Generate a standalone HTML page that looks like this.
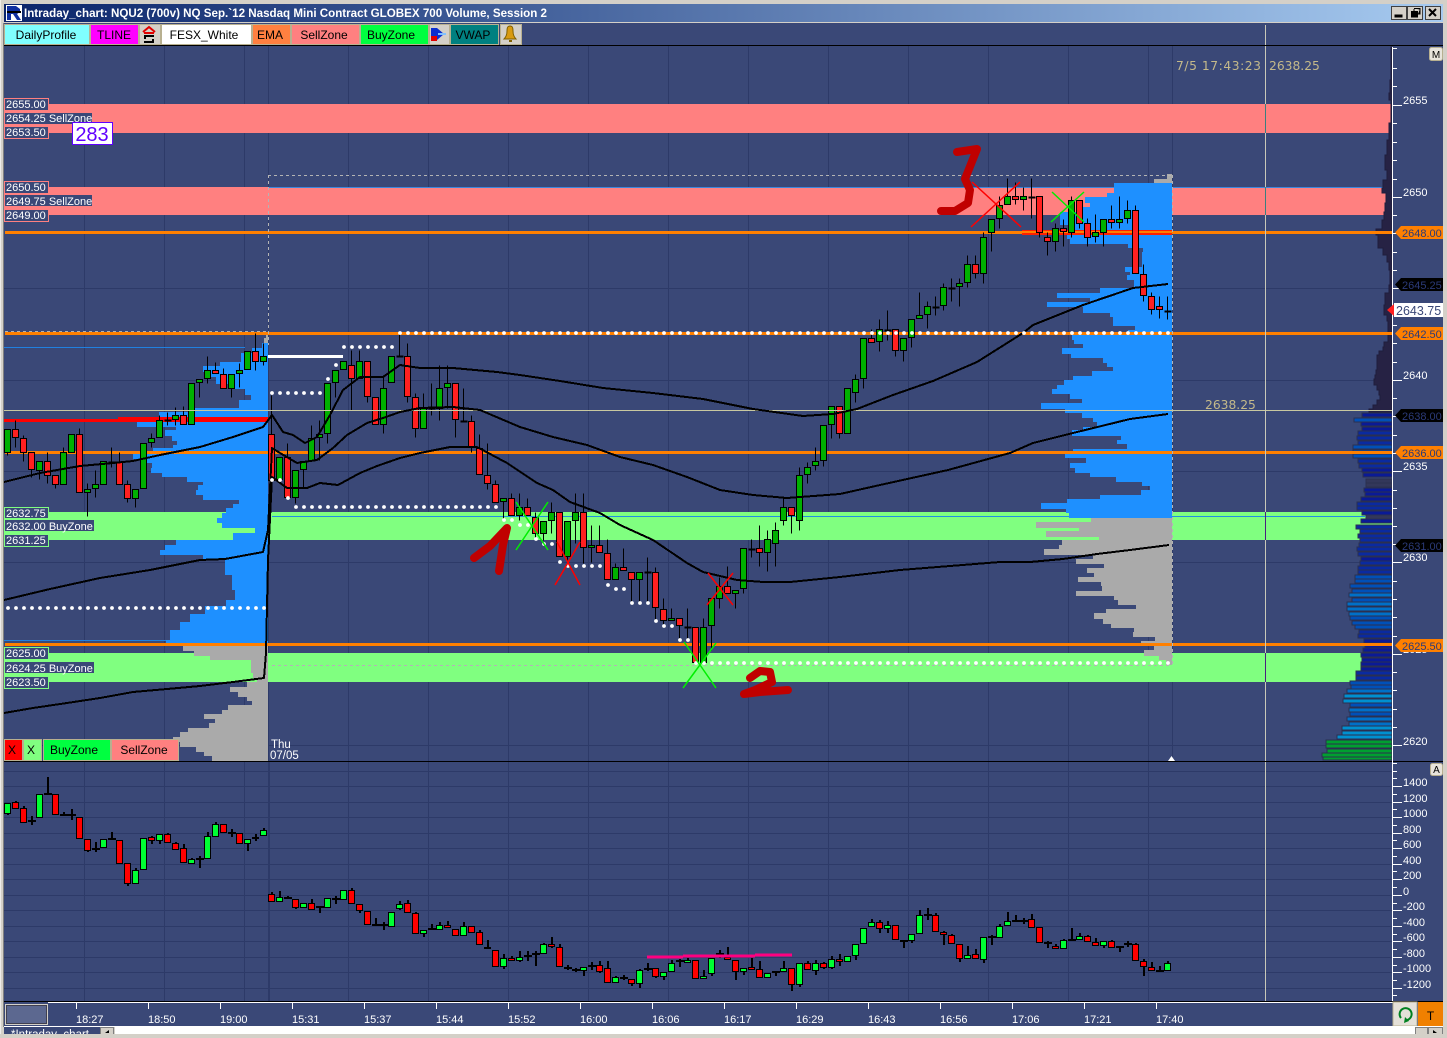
<!DOCTYPE html>
<html><head><meta charset="utf-8"><title>Intraday_chart</title>
<style>
html,body{margin:0;padding:0;background:#D4D0C8;width:1447px;height:1038px;overflow:hidden}
svg{display:block;position:absolute;left:0;top:0}
text{font-family:"Liberation Sans",sans-serif;font-size:11px;fill:#fff;white-space:pre}
.k text{fill:#000;font-size:12px;text-anchor:middle}
.tag text{fill:#2B3A78;font-size:11px}
.tan{font-family:"DejaVu Sans",sans-serif;font-size:12.3px;fill:#C4B98A}
</style></head><body>
<svg width="1447" height="1038" viewBox="0 0 1447 1038" xmlns="http://www.w3.org/2000/svg">
<defs><linearGradient id="tb" x1="0" x2="1" y1="0" y2="0"><stop offset="0" stop-color="#0A246A"/><stop offset="1" stop-color="#A6CAF0"/></linearGradient></defs>
<rect width="1447" height="1038" fill="#D4D0C8"/>
<rect x="0" y="0" width="1" height="1038" fill="#fff" opacity=".6"/>
<rect x="3" y="23" width="1" height="1004" fill="#808080"/>
<!-- title bar -->
<rect x="4" y="4" width="1439" height="18" fill="url(#tb)"/>
<rect x="6" y="5" width="16" height="16" fill="#fff"/>
<path d="M7 6h9l4 3v3l-3 2 4 6h-4l-4-6h-2v6H7z" fill="#1030A0"/>
<path d="M7 11h14v2H7z" fill="#000"/>
<text x="24" y="17" font-weight="bold" textLength="523" lengthAdjust="spacingAndGlyphs" style="font-size:12px;font-weight:bold">Intraday_chart: NQU2 (700v) NQ Sep.`12 Nasdaq Mini Contract GLOBEX 700 Volume, Session 2</text>
<g fill="#D4D0C8" stroke="#404040"><rect x="1391.5" y="6.5" width="15" height="13"/><rect x="1407.5" y="6.5" width="15" height="13"/><rect x="1425.5" y="6.5" width="15" height="13"/></g>
<path d="M1395 15h7v2h-7zM1414 8.500h6v1M1414 9v2M1420 9v5h-2M1411 11.500h7M1411.500 11v6h6v-6M1411 12.500h7" fill="#000" stroke="#000" stroke-width="1"/>
<path d="M1429 9l7 7M1436 9l-7 7" stroke="#000" stroke-width="2" fill="none"/>
<!-- chart bg -->
<rect x="4" y="23" width="1439" height="1004" fill="#3A4877"/>
<!-- grid -->
<path d="M84.500 46V1001M164.500 46V1001M244.500 46V1001M268.500 46V1001M348.500 46V1001M428.500 46V1001M508.500 46V1001M588.500 46V1001M668.500 46V1001M748.500 46V1001M828.500 46V1001M908.500 46V1001M988.500 46V1001M1068.500 46V1001M1148.500 46V1001M1172.500 46V761M4 105.500H1392M4 197.500H1392M4 288.500H1392M4 380.500H1392M4 471.500H1392M4 562.500H1392M4 654.500H1392M4 745.500H1392M4 771.500H1392M4 786.500H1392M4 802.500H1392M4 817.500H1392M4 833.500H1392M4 848.500H1392M4 864.500H1392M4 879.500H1392M4 895.500H1392M4 910.500H1392M4 926.500H1392M4 941.500H1392M4 957.500H1392M4 972.500H1392M4 988.500H1392" stroke="#2D3A68" fill="none"/>
<rect x="268" y="762" width="2" height="239" fill="#2D3A68"/>
<!-- zones -->
<rect x="4" y="104" width="1388" height="29" fill="#FF8080"/>
<rect x="4" y="187" width="1388" height="28" fill="#FF8080"/>
<rect x="4" y="512" width="1388" height="28" fill="#80FF80"/>
<rect x="4" y="653" width="1388" height="29" fill="#80FF80"/>
<path d="M268 187.500H1390" stroke="#3D86DC" fill="none"/>
<path d="M272 516.500H1365" stroke="#2090E0" fill="none"/>
<path d="M4 347.500H245" stroke="#2080E0" fill="none"/>
<path d="M4 640.500H172" stroke="#2080E0" fill="none"/>
<!-- left profile -->
<path fill="#1E90FF" d="M268 343H262V348H252V353H241V362H220V366H203V372H208V377H216V384H231V389H245V395H251V400H239V408H195V412H159V422H137V427H176V430H165V436H172V441H177V445H173V448H153V453H133V459H147V463H152V468H151V473H162V477H187V482H203V485H198V490H196V495H203V500H239V504H233V508H226V513H222V518H217V523H222V528H255V533H233V540H176V545H165V550H160V555H203V560H225V575H232V590H235V600H226V606H205V614H190V622H180V630H170V640H166V646H268z"/>
<path fill="#AAAAAA" d="M268 333H266V338H264V343H268zM268 646H183V651H194V656H210V660H251V673H253V678H257V682H247V687H230V692H238V697H247V701H252V705H228V710H222V714H204V719H215V723H209V728H188V732H180V737H173V742H180V747H196V752H204V756H212V761H268z"/>
<!-- right profile -->
<path fill="#1E90FF" d="M1172 183H1114V193H1107V197H1085V203H1090V207H1080V212H1060V225H1070V231H1060V235H1067V239H1070V244H1128V248H1143V252H1142V267H1125V272H1130V275H1127V280H1134V288H1100V293H1057V298H1090V302H1047V307H1083V313H1110V317H1113V326H1135V330H1128V335H1072V340H1074V344H1083V348H1062V354H1071V358H1103V363H1107V367H1113V371H1092V376H1073V380H1064V385H1057V389H1052V394H1070V399H1082V403H1041V409H1065V413H1082V418H1093V422H1097V427H1083V430H1072V436H1121V440H1117V444H1127V449H1073V454H1065V458H1086V463H1070V468H1075V473H1090V477H1116V482H1142V486H1150V490H1141V495H1100V499H1067V503H1041V509H1066V513H1069V518H1172z"/>
<path fill="#AAAAAA" d="M1172 174H1167V179H1154V183H1172zM1172 518H1091V522H1036V528H1079V531H1046V537H1099V540H1062V545H1059V549H1044V555H1093V559H1076V564H1104V568H1087V573H1094V577H1078V582H1101V586H1102V591H1076V596H1114V600H1118V605H1136V609H1106V613H1094V619H1103V624H1111V628H1134V632H1133V637H1155V641H1141V646H1154V650H1144V656H1159V660H1166V665H1172z"/>
<path d="M164 410.500H268M1065 410.500H1172" stroke="#FF8000" fill="none"/>
<!-- DOM profile -->
<path fill="#262244" stroke="#1F1D3C" d="M1392 47H1391V80H1390V93H1389V100H1391V123H1389V140H1387V155H1385V170H1387V180H1383V188H1382V193H1386V203H1385V212H1384V220H1382V229H1376V235H1378V248H1383V255H1387V262H1389V270H1390V285H1389V293H1385V305H1384V315H1387V321H1388V333H1390V335H1388V342H1384V347H1383V351H1379V355H1377V370H1376V375H1375V379H1374V385H1377V390H1379V395H1380V400H1377V405H1373V409H1369V412H1392z"/>
<g stroke="#2B3050">
<path fill="#33375A" d="M1366 479H1392v4H1366zM1366 483H1392v4H1366zM1366 515H1392v4H1366z"/>
<path fill="#0A1A96" d="M1362 413H1392v4H1362zM1361 422H1392v4H1361zM1362 427H1392v4H1362zM1362 468H1392v4H1362zM1363 473H1392v4H1363zM1364 488H1392v4H1364zM1365 492H1392v4H1365zM1361 497H1392v4H1361zM1362 511H1392v4H1362zM1361 519H1392v4H1361zM1361 557H1392v4H1361zM1364 639H1392v4H1364zM1365 644H1392v4H1365zM1363 648H1392v4H1363zM1361 653H1392v4H1361zM1362 658H1392v4H1362zM1361 662H1392v4H1361zM1361 667H1392v4H1361z"/>
<path fill="#0A2AA0" d="M1358 431H1392v4H1358zM1357 436H1392v4H1357zM1358 441H1392v4H1358zM1358 459H1392v4H1358zM1359 464H1392v4H1359zM1357 502H1392v4H1357zM1357 506H1392v4H1357zM1356 525H1392v4H1356zM1360 529H1392v4H1360zM1358 534H1392v4H1358zM1360 538H1392v4H1360zM1359 543H1392v4H1359zM1357 547H1392v4H1357zM1358 552H1392v4H1358zM1360 561H1392v4H1360zM1358 566H1392v4H1358zM1358 570H1392v4H1358zM1359 630H1392v4H1359zM1358 634H1392v4H1358zM1356 671H1392v4H1356zM1356 676H1392v4H1356z"/>
<path fill="#0050B8" d="M1354 418H1392v4H1354zM1353 445H1392v4H1353zM1353 450H1392v4H1353zM1353 454H1392v4H1353zM1355 575H1392v4H1355zM1355 579H1392v4H1355zM1350 584H1392v4H1350zM1352 589H1392v4H1352zM1352 598H1392v4H1352zM1350 616H1392v4H1350zM1352 621H1392v4H1352zM1355 625H1392v4H1355zM1350 681H1392v4H1350zM1351 685H1392v4H1351zM1350 703H1392v4H1350zM1350 712H1392v4H1350z"/>
<path fill="#0070C8" d="M1349 593H1392v4H1349zM1347 602H1392v4H1347zM1347 607H1392v4H1347zM1349 612H1392v4H1349zM1347 689H1392v4H1347zM1349 708H1392v4H1349zM1347 717H1392v4H1347zM1349 722H1392v4H1349z"/>
<path fill="#0090D0" d="M1344 694H1392v4H1344zM1343 699H1392v4H1343zM1342 726H1392v4H1342zM1342 731H1392v4H1342zM1337 735H1392v4H1337z"/>
<path fill="#00A030" d="M1326 740H1392v4H1326zM1326 744H1392v4H1326zM1327 749H1392v4H1327zM1322 753H1392v4H1322zM1323 757H1392v3H1323z"/>
</g>
<!-- orange lines -->
<g fill="#FF8000"><rect x="5" y="231" width="1388" height="3"/><rect x="5" y="332" width="1388" height="3"/><rect x="5" y="451" width="1388" height="3"/><rect x="5" y="643" width="1388" height="3"/></g>
<!-- red lines -->
<rect x="4" y="419" width="264" height="3" fill="#FF0000"/><rect x="118" y="417" width="150" height="2" fill="#FF0000"/>
<rect x="1022" y="230" width="150" height="5" fill="#FF2000"/><rect x="1022" y="231" width="150" height="2" fill="#FF8000"/>
<rect x="268" y="355" width="75" height="3" fill="#fff"/>
<!-- dashed -->
<path d="M268 175.500H1172M268.500 175V345M5 331.500H268M1172.500 175V665M272 665.500H1172" stroke="#B4B4B4" stroke-dasharray="3 3" fill="none"/>
<!-- top candles -->
<g transform="translate(.5 .5)">
<path stroke="#000" fill="none" d="M7 429V455M15 420V447M23 435V461M31 452V477M39 461V479M47 452V483M55 475V488M63 447V484M79 428V492M87 483V516M95 470V497M111 447V467M119 452V484M127 480V502M135 489V507M151 433V447M159 415V437M167 412V425M175 407V425M183 406V424M199 379V397M207 356V383M215 362V373M223 368V388M231 374V397M239 363V387M255 333V370M263 343V365M271 395V480M287 443V497M295 470V503M303 461V487M311 425V460M319 420V460M327 383V443M335 370V397M351 350V410M359 350V378M367 361V402M383 377V433M399 333V356M407 343V402M415 393V437M423 393V428M431 383V415M439 365V420M447 365V408M455 383V437M463 388V421M471 415V452M479 434V474M487 443V489M495 480V502M503 498V520M511 493V515M519 493V520M527 498V515M535 512V540M543 521V540M551 502V533M559 512V556M567 521V560M575 493V543M583 493V563M591 525V562M599 525V552M607 539V579M615 563V579M623 548V570M631 572V602M639 572V602M647 557V602M655 567V620M663 598V625M671 608V620M679 618V638M687 608V638M703 618V662M711 598V650M719 577V608M727 566V593M735 590V608M743 548V593M751 539V557M759 525V566M767 530V571M775 522V566M783 498V525M791 507V533M799 467V530M807 462V483M815 447V470M823 425V466M831 406V438M839 406V438M847 388V433M855 374V402M863 338V388M871 329V342M879 319V351M887 310V340M895 329V356M903 338V361M911 319V347M919 292V318M927 301V328M935 296V315M943 283V310M951 278V301M959 278V306M967 255V287M975 255V278M983 232V283M991 219V251M999 196V228M1007 178V204M1015 182V204M1023 187V210M1031 178V218M1039 196V237M1047 232V255M1055 223V251M1063 219V246M1071 196V237M1079 200V228M1087 218V246M1095 214V242M1103 219V246M1111 205V228M1119 196V228M1127 200V223M1135 205V273M1143 264V301M1151 292V314M1159 296V318M1167 296V319"/>
<path stroke="#000" stroke-width="2" fill="none" d="M108 462h7M164 420h7M396 356h7M428 408h7M460 421h7M644 572h7M684 627h7M748 549h7M884 330h7M932 307h7M948 288h7M1028 197h7M1164 311h7"/>
<path stroke="#000" fill="#00B000" d="M4 429h6V452h-6zM36 461h6V470h-6zM60 452h6V484h-6zM68 434h6V452h-6zM84 489h6V492h-6zM92 484h6V488h-6zM100 461h6V484h-6zM132 489h6V498h-6zM140 443h6V488h-6zM148 438h6V442h-6zM156 420h6V437h-6zM172 415h6V419h-6zM188 383h6V424h-6zM196 379h6V382h-6zM204 370h6V378h-6zM228 374h6V388h-6zM236 370h6V373h-6zM244 351h6V369h-6zM260 356h6V361h-6zM276 457h6V479h-6zM292 470h6V497h-6zM300 461h6V469h-6zM308 438h6V460h-6zM316 434h6V437h-6zM324 383h6V433h-6zM332 370h6V382h-6zM340 361h6V369h-6zM356 361h6V378h-6zM380 388h6V424h-6zM388 356h6V382h-6zM420 407h6V428h-6zM436 388h6V408h-6zM444 383h6V387h-6zM500 498h6V501h-6zM516 507h6V515h-6zM540 521h6V533h-6zM548 512h6V520h-6zM564 521h6V556h-6zM572 512h6V520h-6zM588 545h6V547h-6zM612 567h6V579h-6zM636 572h6V579h-6zM668 618h6V620h-6zM700 627h6V662h-6zM708 598h6V625h-6zM716 586h6V598h-6zM732 590h6V593h-6zM740 548h6V588h-6zM764 539h6V552h-6zM772 530h6V543h-6zM780 507h6V520h-6zM796 475h6V520h-6zM804 467h6V474h-6zM812 461h6V465h-6zM820 425h6V460h-6zM828 406h6V424h-6zM844 388h6V433h-6zM852 379h6V392h-6zM860 338h6V378h-6zM876 329h6V341h-6zM900 338h6V350h-6zM908 319h6V337h-6zM916 315h6V318h-6zM924 306h6V314h-6zM940 287h6V305h-6zM956 283h6V286h-6zM964 264h6V282h-6zM980 237h6V273h-6zM988 219h6V232h-6zM996 205h6V218h-6zM1004 196h6V204h-6zM1020 196h6V199h-6zM1052 228h6V241h-6zM1068 200h6V232h-6zM1092 232h6V236h-6zM1100 219h6V232h-6zM1116 219h6V222h-6zM1124 210h6V218h-6z"/>
<path stroke="#000" fill="#FF2020" d="M12 429h6V437h-6zM20 438h6V452h-6zM28 452h6V469h-6zM44 461h6V475h-6zM52 475h6V484h-6zM76 434h6V492h-6zM116 462h6V484h-6zM124 484h6V498h-6zM180 415h6V424h-6zM212 370h6V373h-6zM220 374h6V388h-6zM252 351h6V361h-6zM268 434h6V480h-6zM284 457h6V497h-6zM348 365h6V378h-6zM364 361h6V396h-6zM372 397h6V424h-6zM404 356h6V396h-6zM412 397h6V428h-6zM452 383h6V419h-6zM468 421h6V447h-6zM476 448h6V474h-6zM484 475h6V483h-6zM492 484h6V502h-6zM508 498h6V515h-6zM524 507h6V515h-6zM532 517h6V533h-6zM556 512h6V556h-6zM580 512h6V547h-6zM596 545h6V552h-6zM604 553h6V579h-6zM620 567h6V570h-6zM628 572h6V579h-6zM652 572h6V607h-6zM660 609h6V620h-6zM676 618h6V625h-6zM692 627h6V662h-6zM724 586h6V593h-6zM756 548h6V552h-6zM788 507h6V515h-6zM836 406h6V433h-6zM868 338h6V342h-6zM892 329h6V350h-6zM972 264h6V273h-6zM1012 196h6V199h-6zM1036 196h6V232h-6zM1044 237h6V241h-6zM1060 228h6V231h-6zM1076 200h6V223h-6zM1084 223h6V237h-6zM1108 219h6V222h-6zM1132 210h6V273h-6zM1140 274h6V295h-6zM1148 296h6V309h-6zM1156 306h6V309h-6z"/>
</g>
<!-- tan line -->
<rect x="4" y="410" width="1389" height="1" fill="#C8C8A0"/>
<!-- EMAs -->
<g fill="none" stroke="#000" stroke-width="2" stroke-linejoin="round" shape-rendering="crispEdges">
<path d="M4 482L20 478L40 473L80 466L113 463L133 461L160 455L200 447L233 437L263 427L272 415L283 432L293 435L305 443L317 437L330 415L343 390L360 377L383 377L400 365L420 368L453 368L497 372L520 375L560 381L603 388L653 393L703 399L753 409L803 416L833 414L857 409L893 395L933 381L977 362L1023 333L1033 325L1083 305L1133 288L1168 284"/>
<path d="M4 600L50 589L100 578L150 570L200 560L225 559L263 552L268 530L272 448L280 453L297 463L317 460L333 448L347 435L367 423L383 418L400 412L420 408L453 407L480 410L520 427L553 437L587 445L620 457L653 465L687 477L720 490L753 495L787 498L840 494L880 485L948 470L1010 453L1033 443L1073 433L1130 419L1168 414"/>
<path d="M4 713L33 708L67 703L100 698L133 692L167 689L200 686L233 682L264 678L266 653L268 560L272 477L287 488L307 488L320 483L338 485L360 473L377 466L400 458L420 453L450 447L477 447L507 463L537 483L553 490L570 502L600 513L620 525L653 540L687 563L703 572L737 580L763 582L790 582L840 577L900 570L1000 562L1030 562L1063 559L1097 554L1130 550L1169 545"/>
</g>
<!-- white dots -->
<g fill="none" stroke="#fff" stroke-width="3.800" stroke-linecap="round">
<path stroke-dasharray="0 8" d="M400 333H1169M344 347H393M272 393H321M296 507H497M8 608H265M704 663H1169M576 566H601M640 603H649"/>
<path d="M328 379h0M336 365h0M272 480h0M280 480h0M288 498h0M504 520h0M512 520h0M520 525h0M528 525h0M536 539h0M544 544h0M552 544h0M560 562h0M568 566h0M608 585h0M616 589h0M624 589h0M632 603h0M656 621h0M664 626h0M672 626h0M680 640h0M688 640h0M696 663h0"/>
</g>
<!-- hand drawn -->
<g fill="none" stroke="#C00000" stroke-width="8" stroke-linecap="round" stroke-linejoin="round">
<path d="M474 558L490 546L507 528L503 545L499 571"/>
<path d="M750 678L760 671L770 672L772 682L755 690L744 694L760 692L788 690"/>
<path d="M957 152L977 149L965 179L970 190L968 203L955 211L941 211"/>
</g>
<g fill="none" stroke-width="1.500">
<path stroke="#FF0000" d="M972 182L1021 227M971 227L1020 182M555 585L580 542M557 542L580 585M708 573L733 605M707 605L733 573"/>
<path stroke="#00EE00" d="M1052 192L1084 222M1051 222L1084 192M516 502L548 550M516 550L548 502M684 642L716 688M683 688L716 643"/>
</g>
<!-- crosshair -->
<rect x="1265" y="25" width="1" height="976" fill="#C8C8B8"/>
<rect x="1265" y="104" width="1" height="29" fill="#3A7F7F"/><rect x="1265" y="187" width="1" height="28" fill="#3A7F7F"/><rect x="1265" y="512" width="1" height="28" fill="#4B2080"/><rect x="1265" y="653" width="1" height="29" fill="#4B2080"/>
<!-- toolbar line and separators -->
<rect x="4" y="45" width="1439" height="1" fill="#000"/>
<rect x="4" y="761" width="1439" height="1" fill="#000"/>
<path d="M1168 761l3.500-5 3.500 5z" fill="#fff"/>
<!-- toolbar buttons -->
<g class="k" stroke="none">
<g stroke="#B8B090">
<rect x="4.500" y="24.500" width="85" height="20" fill="#80FFFF"/>
<rect x="90.500" y="24.500" width="48" height="20" fill="#FF00FF"/>
<rect x="139.500" y="24.500" width="21" height="20" fill="#D4D0C8"/>
<rect x="161.500" y="24.500" width="90" height="20" fill="#fff"/>
<rect x="252.500" y="24.500" width="38" height="20" fill="#FF8040"/>
<rect x="291.500" y="24.500" width="68" height="20" fill="#FF8080"/>
<rect x="360.500" y="24.500" width="68" height="20" fill="#00FF40"/>
<rect x="429.500" y="24.500" width="20" height="20" fill="#D4D0C8"/>
<rect x="450.500" y="24.500" width="48" height="20" fill="#008080"/>
<rect x="500.500" y="24.500" width="21" height="20" fill="#D4D0C8"/>
</g>
<text x="46" y="39">DailyProfile</text><text x="114" y="39">TLINE</text><text x="204" y="39">FESX_White</text><text x="270" y="39">EMA</text><text x="324" y="39">SellZone</text><text x="391" y="39">BuyZone</text><text x="473" y="39">VWAP</text>
</g>
<path d="M143 32l6-5 6 5M144 33h10" fill="none" stroke="#E00000" stroke-width="2"/>
<path d="M144 35h10v2h-8v2h8v4h-10v-2h8v-2h-8z" fill="#000"/>
<path d="M431 28h6l7 6-7 6h-6z" fill="#0A2ED0"/><path d="M431 36h6v5h-6z" fill="#E00000"/>
<path d="M438 33h8v2h-8z" fill="#80C0FF"/>
<path d="M510 26c3 0 3 3 3 5 0 4 1 6 3 8h-12c2-2 3-4 3-8 0-2 0-5 3-5z" fill="#D89A10" stroke="#806000"/>
<path d="M509 40h3v2h-3z" fill="#806000"/>
<!-- labels left -->
<g>
<g fill="#3A4877" stroke="#FF8080"><rect x="4.500" y="98.500" width="44" height="12"/><rect x="4.500" y="126.500" width="44" height="12"/><rect x="4.500" y="181.500" width="44" height="12"/><rect x="4.500" y="209.500" width="44" height="12"/></g>
<g fill="#3A4877" stroke="#80FF80"><rect x="4.500" y="507.500" width="44" height="11"/><rect x="4.500" y="534.500" width="44" height="12"/><rect x="4.500" y="647.500" width="44" height="12"/><rect x="4.500" y="676.500" width="44" height="12"/></g>
<g fill="#3A4877"><rect x="5" y="113" width="87" height="11"/><rect x="5" y="195" width="87" height="11"/><rect x="5" y="520" width="89" height="11"/><rect x="5" y="662" width="89" height="11"/></g>
<text x="6" y="108">2655.00</text><text x="6" y="122">2654.25 SellZone</text><text x="6" y="136">2653.50</text>
<text x="6" y="191">2650.50</text><text x="6" y="205">2649.75 SellZone</text><text x="6" y="219">2649.00</text>
<text x="6" y="517">2632.75</text><text x="6" y="530">2632.00 BuyZone</text><text x="6" y="544">2631.25</text>
<text x="6" y="657">2625.00</text><text x="6" y="672">2624.25 BuyZone</text><text x="6" y="686">2623.50</text>
<rect x="72.500" y="122.500" width="40" height="22" fill="#fff" stroke="#6000FF"/>
<text x="92" y="141" text-anchor="middle" style="font-size:20px;fill:#6000FF">283</text>
</g>
<!-- legend -->
<g class="k"><g stroke="#B8B090">
<rect x="4.500" y="739.500" width="18" height="21" fill="#FF0000"/><rect x="23.500" y="739.500" width="18" height="21" fill="#80FF80"/><rect x="43.500" y="739.500" width="67" height="21" fill="#00FF40"/><rect x="111.500" y="739.500" width="67" height="21" fill="#FF8080"/></g>
<text x="12" y="754">X</text><text x="31" y="754">X</text><text x="74" y="754">BuyZone</text><text x="144" y="754">SellZone</text></g>
<text x="271" y="748" style="font-size:11.500px">Thu</text><text x="270" y="759" style="font-size:11.500px">07/05</text>
<!-- tan text -->
<text class="tan" x="1176" y="70" textLength="85">7/5 17:43:23</text><text class="tan" x="1269" y="70">2638.25</text>
<text class="tan" x="1205" y="409">2638.25</text>
<!-- bottom candles -->
<g fill="none" stroke="#000" stroke-width="2">
<path d="M8 803V815M16 801V808M24 806V822M32 816V825M48 777V794M64 812V815M72 809V820M88 839V852M96 842V852M112 832V839M128 863V886M136 868V883M152 836V844M160 834V844M168 833V842M176 842V849M184 844V862M192 858V863M200 856V868M208 832V858M216 822V837M224 824V833M232 829V837M240 833V843M248 843V851M256 834V841M264 828V835M272 892V901M280 891V901M288 896V898M296 899V909M312 899V909M320 907V913M336 896V904M352 888V903M360 904V913M376 918V925M384 922V930M400 901V910M408 900V912M416 912V933M424 933V937M432 924V929M440 922V929M448 921V927M464 922V935M472 926V933M480 930V944M488 940V948M504 954V969M512 956V960M520 951V962M528 951V961M536 951V966M544 943V953M552 937V948M560 944V966M568 965V970M576 968V972M584 970V976M592 962V970M600 961V973M608 961V968M616 976V982M624 975V980M632 983V986M640 969V988M648 963V971M656 976V978M664 976V980M672 960V971M680 959V967M688 958V962M704 970V976M712 973V976M720 950V958M728 947V957M736 971V980M744 971V975M752 958V969M760 961V969M776 971V976M784 961V968M792 984V991M800 984V987M808 961V963M816 960V975M824 962V969M832 956V969M840 954V966M848 956V961M856 955V960M872 919V922M880 920V933M888 921V933M904 941V948M912 940V943M920 910V915M928 908V920M936 913V915M944 931V945M952 934V935M960 958V962M968 946V958M976 949V954M984 959V963M992 935V945M1000 924V926M1008 912V921M1016 915V921M1024 918V924M1032 914V928M1040 942V943M1048 941V948M1056 944V948M1064 939V940M1072 928V940M1080 933V936M1088 935V936M1096 938V942M1104 945V948M1112 940V941M1120 947V952M1128 941V947M1136 943V944M1144 959V976M1152 962V967M1160 966V971M1168 961V963"/>
<path d="M28 821h8M44 794h8M60 815h8M68 815h8M92 849h8M108 839h8M196 859h8M228 833h8M284 898h8M316 907h8M332 899h8M372 925h8M380 925h8M428 929h8M524 956h8M532 954h8M564 968h8M572 970h8M588 966h8M620 978h8M644 969h8M676 961h8M716 954h8M772 972h8M900 941h8M924 915h8M988 937h8M1012 921h8M1020 921h8M1044 943h8M1068 940h8M1116 947h8M1124 944h8M1156 971h8"/>
</g>
<g transform="translate(.5 .5)" stroke="#000">
<path fill="#00FF33" d="M4 803h6V813h-6zM36 794h6V817h-6zM100 839h6V847h-6zM132 870h6V883h-6zM140 838h6V869h-6zM156 834h6V840h-6zM188 859h6V863h-6zM204 836h6V858h-6zM212 824h6V836h-6zM244 839h6V843h-6zM252 837h6V838h-6zM260 830h6V835h-6zM276 897h6V901h-6zM300 903h6V907h-6zM324 898h6V907h-6zM340 890h6V899h-6zM388 912h6V926h-6zM396 904h6V908h-6zM420 930h6V933h-6zM436 925h6V929h-6zM460 926h6V935h-6zM500 958h6V966h-6zM516 957h6V960h-6zM540 944h6V953h-6zM580 967h6V970h-6zM612 977h6V982h-6zM636 970h6V983h-6zM660 972h6V976h-6zM668 963h6V971h-6zM684 960h6V962h-6zM700 976h6V978h-6zM708 958h6V973h-6zM740 968h6V971h-6zM764 973h6V977h-6zM780 968h6V971h-6zM796 963h6V984h-6zM812 963h6V970h-6zM828 959h6V967h-6zM844 956h6V961h-6zM852 944h6V955h-6zM860 928h6V943h-6zM868 922h6V926h-6zM884 925h6V928h-6zM908 934h6V940h-6zM916 915h6V933h-6zM964 955h6V958h-6zM980 937h6V959h-6zM996 926h6V937h-6zM1004 921h6V925h-6zM1060 940h6V948h-6zM1076 936h6V939h-6zM1100 941h6V945h-6zM1164 963h6V970h-6z"/>
<path fill="#FF0000" d="M12 802h6V808h-6zM20 808h6V822h-6zM52 794h6V814h-6zM76 817h6V838h-6zM84 839h6V850h-6zM116 840h6V863h-6zM124 863h6V883h-6zM148 837h6V840h-6zM164 834h6V842h-6zM172 843h6V849h-6zM180 848h6V862h-6zM220 824h6V832h-6zM236 833h6V843h-6zM268 894h6V901h-6zM292 899h6V907h-6zM308 903h6V909h-6zM348 890h6V903h-6zM356 904h6V910h-6zM364 911h6V924h-6zM404 903h6V912h-6zM412 913h6V933h-6zM444 925h6V927h-6zM452 929h6V935h-6zM468 926h6V932h-6zM476 932h6V944h-6zM484 947h6V948h-6zM492 950h6V966h-6zM508 958h6V960h-6zM548 944h6V946h-6zM556 947h6V966h-6zM596 965h6V971h-6zM604 968h6V982h-6zM628 979h6V983h-6zM652 968h6V976h-6zM692 960h6V978h-6zM724 957h6V959h-6zM732 960h6V971h-6zM748 967h6V969h-6zM756 969h6V977h-6zM788 968h6V984h-6zM804 963h6V969h-6zM820 963h6V967h-6zM836 959h6V961h-6zM876 922h6V928h-6zM892 925h6V939h-6zM932 915h6V931h-6zM940 932h6V934h-6zM948 935h6V943h-6zM956 944h6V958h-6zM972 954h6V958h-6zM1028 919h6V927h-6zM1036 927h6V942h-6zM1052 946h6V948h-6zM1084 936h6V941h-6zM1092 942h6V945h-6zM1108 941h6V947h-6zM1132 944h6V960h-6zM1140 961h6V966h-6zM1148 967h6V970h-6z"/>
</g>
<rect x="647" y="955.500" width="36" height="3" fill="#FF0080"/><rect x="683" y="954.500" width="72" height="3" fill="#FF0080"/><rect x="755" y="953.500" width="37" height="3" fill="#FF0080"/>
<!-- right axis -->
<rect x="1392" y="47" width="1" height="954" fill="#fff"/>
<path stroke="#fff" fill="none" d="M1393 48.500h4M1393 68.500h4M1393 86.500h4M1393 105.500h9M1393 123.500h4M1393 142.500h4M1393 160.500h4M1393 179.500h4M1393 197.500h9M1393 215.500h4M1393 233.500h4M1393 252.500h4M1393 270.500h4M1393 288.500h9M1393 307.500h4M1393 325.500h4M1393 343.500h4M1393 362.500h4M1393 380.500h9M1393 398.500h4M1393 416.500h4M1393 435.500h4M1393 453.500h4M1393 471.500h9M1393 490.500h4M1393 508.500h4M1393 526.500h4M1393 544.500h4M1393 562.500h9M1393 581.500h4M1393 599.500h4M1393 617.500h4M1393 636.500h4M1393 654.500h9M1393 672.500h4M1393 690.500h4M1393 709.500h4M1393 727.500h4M1393 745.500h9M1393 763.500h4M1393 771.500h4M1393 778.500h4M1393 786.500h9M1393 794.500h4M1393 802.500h9M1393 809.500h4M1393 817.500h9M1393 825.500h4M1393 833.500h9M1393 840.500h4M1393 848.500h9M1393 856.500h4M1393 864.500h9M1393 871.500h4M1393 879.500h9M1393 887.500h4M1393 895.500h9M1393 903.500h4M1393 910.500h9M1393 918.500h4M1393 926.500h9M1393 934.500h4M1393 941.500h9M1393 949.500h4M1393 957.500h9M1393 965.500h4M1393 972.500h9M1393 980.500h4M1393 988.500h9M1393 995.500h4"/>
<text x="1403" y="104">2655</text><text x="1403" y="196">2650</text><text x="1403" y="379">2640</text><text x="1403" y="470">2635</text><text x="1403" y="561">2630</text><text x="1403" y="653">2625</text><text x="1403" y="745">2620</text>
<text x="1403" y="786">1400</text><text x="1403" y="802">1200</text><text x="1403" y="817">1000</text><text x="1403" y="833">800</text><text x="1403" y="848">600</text><text x="1403" y="864">400</text><text x="1403" y="879">200</text><text x="1403" y="895">0</text><text x="1403" y="910">-200</text><text x="1403" y="926">-400</text><text x="1403" y="941">-600</text><text x="1403" y="957">-800</text><text x="1403" y="972">-1000</text><text x="1403" y="988">-1200</text>
<!-- price tags -->
<g class="tag">
<path fill="#FF8000" d="M1395 232.500l6-6.500H1443V239H1401zM1395 333.500l6-6.500H1443V340H1401zM1395 452.500l6-6.500H1443V459H1401zM1395 645.500l6-6.500H1443V652H1401z"/>
<path fill="#000" d="M1395 284.500l6-6.500H1443V291H1401zM1395 415.500l6-6.500H1443V422H1401zM1395 545.500l6-6.500H1443V552H1401z"/>
<text x="1402" y="237">2648.00</text><text x="1402" y="338">2642.50</text><text x="1402" y="457">2636.00</text><text x="1402" y="650">2625.50</text>
<text x="1402" y="289">2645.25</text><text x="1402" y="420">2638.00</text><text x="1402" y="550">2631.00</text>
</g>
<rect x="1394" y="303" width="49" height="14" fill="#fff"/>
<path d="M1387 310l7-6v12z" fill="#FF2020"/>
<text x="1396" y="315" style="font-size:12.500px;fill:#3A4877">2643.75</text>
<!-- M / A buttons -->
<rect x="1429.500" y="47.500" width="13" height="13" rx="2" fill="#E8E4DC" stroke="#B8B090"/><text x="1436" y="58" text-anchor="middle" style="font-size:10px;fill:#000">M</text>
<rect x="1430.500" y="763.500" width="12" height="12" rx="2" fill="#E8E4DC" stroke="#B8B090"/><text x="1436.500" y="773" text-anchor="middle" style="font-size:10px;fill:#000">A</text>
<!-- time axis -->
<rect x="4" y="1001" width="1439" height="1" fill="#000"/>
<rect x="48" y="1002" width="1345" height="1" fill="#fff"/>
<path stroke="#fff" fill="none" d="M76.500 1003v6M148.500 1003v6M220.500 1003v6M292.500 1003v6M364.500 1003v6M436.500 1003v6M508.500 1003v6M580.500 1003v6M652.500 1003v6M724.500 1003v6M796.500 1003v6M868.500 1003v6M940.500 1003v6M1012.500 1003v6M1084.500 1003v6M1156.500 1003v6"/>
<text x="76" y="1023">18:27</text><text x="148" y="1023">18:50</text><text x="220" y="1023">19:00</text><text x="292" y="1023">15:31</text><text x="364" y="1023">15:37</text><text x="436" y="1023">15:44</text><text x="508" y="1023">15:52</text><text x="580" y="1023">16:00</text><text x="652" y="1023">16:06</text><text x="724" y="1023">16:17</text><text x="796" y="1023">16:29</text><text x="868" y="1023">16:43</text><text x="940" y="1023">16:56</text><text x="1012" y="1023">17:06</text><text x="1084" y="1023">17:21</text><text x="1156" y="1023">17:40</text>
<rect x="5.500" y="1004.500" width="42" height="20" fill="#5C6890" stroke="#D4D0C8" stroke-width="1"/>
<rect x="6.500" y="1005.500" width="40" height="18" fill="none" stroke="#404050"/>
<rect x="1393" y="1002" width="24" height="24" fill="#E4E0D8" stroke="#B8B090"/>
<path d="M1401 1018a6 6 0 1 1 6 2" fill="none" stroke="#008020" stroke-width="2"/><path d="M1405 1017l-1 6 5-2z" fill="#008020"/>
<rect x="1418" y="1002" width="25" height="24" fill="#F08000"/>
<text x="1430.500" y="1020" text-anchor="middle" style="font-size:12px;fill:#000">T</text>
<!-- bottom tabs/scroll -->
<rect x="4" y="1026" width="1439" height="1" fill="#fff"/>
<rect x="4" y="1027" width="96" height="8" fill="#3A4877"/>
<text x="11" y="1038" style="font-size:11.500px">*Intraday_chart</text>
<rect x="100.500" y="1027.500" width="13" height="8" fill="#D4D0C8" stroke="#808080"/>
<path d="M109 1030l-4 3h4z" fill="#000"/>
<rect x="115" y="1027" width="1300" height="7" fill="#fff"/>
<rect x="1415.500" y="1027.500" width="12" height="7" fill="#D4D0C8" stroke="#808080"/>
<rect x="1428.500" y="1027.500" width="14" height="7" fill="#D4D0C8" stroke="#808080"/>
<path d="M1433 1030l4 3h-4z" fill="#000"/>
<rect x="0" y="1034" width="1447" height="4" fill="#D4D0C8"/>
<rect x="1443" y="0" width="4" height="1038" fill="#D4D0C8"/>
</svg>
</body></html>
